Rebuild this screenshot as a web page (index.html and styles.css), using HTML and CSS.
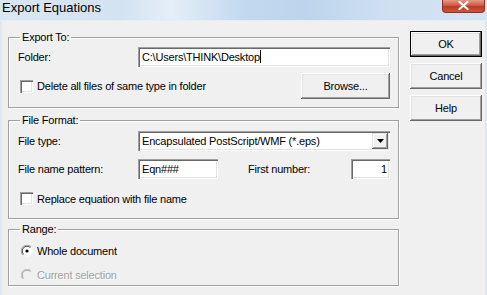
FILE: index.html
```html
<!DOCTYPE html>
<html lang="en">
<head>
    <meta charset="utf-8">
    <title>Export Equations</title>
    <link rel="stylesheet" href="styles.css">
</head>
<body>
    <div class="dialog">
        <div class="titlebar">
            <span class="title">Export Equations</span>
            <span class="close">
                <svg width="11" height="9" viewBox="0 0 11 9"><path d="M1.5 1 L9.5 8 M9.5 1 L1.5 8" stroke="#fff" stroke-width="2.2" stroke-linecap="round"/></svg>
            </span>
        </div>

        <div class="client">
            <div class="groups">
                <fieldset class="group export-to">
                    <legend>Export To:</legend>
                    <div class="row">
                        <span class="lbl">Folder:</span>
                        <div class="edit wide">C:\Users\THINK\Desktop<span class="caret"></span></div>
                    </div>
                    <div class="row row-browse">
                        <label class="check"><span class="box"></span>Delete all files of same type in folder</label>
                        <button class="btn browse">Browse...</button>
                    </div>
                </fieldset>

                <fieldset class="group file-format">
                    <legend>File Format:</legend>
                    <div class="row">
                        <span class="lbl">File type:</span>
                        <div class="edit wide combo">
                            Encapsulated PostScript/WMF (*.eps)
                            <span class="drop">
                                <svg width="7" height="4" viewBox="0 0 7 4"><path d="M0 0 H7 L3.5 4 Z" fill="#000"/></svg>
                            </span>
                        </div>
                    </div>
                    <div class="row row-gap">
                        <span class="lbl">File name pattern:</span>
                        <div class="edit pattern">Eqn###</div>
                        <span class="lbl-first">First number:</span>
                        <div class="edit number">1</div>
                    </div>
                    <div class="row row-check">
                        <label class="check"><span class="box"></span>Replace equation with file name</label>
                    </div>
                </fieldset>

                <fieldset class="group range">
                    <legend>Range:</legend>
                    <label class="radio">
                        <svg width="12" height="12" viewBox="0 0 12 12">
                            <circle cx="6" cy="6" r="5.5" fill="#fff"/>
                            <path d="M1.8 10.2 A5.5 5.5 0 0 1 10.2 1.8" stroke="#a0a0a0" fill="none"/>
                            <path d="M2.6 9.4 A4.5 4.5 0 0 1 9.4 2.6" stroke="#404040" fill="none"/>
                            <circle cx="6" cy="6" r="1.6" fill="#000"/>
                        </svg>
                        Whole document
                    </label>
                    <label class="radio disabled">
                        <svg width="12" height="12" viewBox="0 0 12 12">
                            <circle cx="6" cy="6" r="5.5" fill="#f0f0f0"/>
                            <path d="M1.8 10.2 A5.5 5.5 0 0 1 10.2 1.8" stroke="#c0c0c0" fill="none"/>
                            <path d="M2.6 9.4 A4.5 4.5 0 0 1 9.4 2.6" stroke="#a0a0a0" fill="none"/>
                        </svg>
                        Current selection
                    </label>
                </fieldset>
            </div>

            <div class="buttons">
                <button class="btn default">OK</button>
                <button class="btn">Cancel</button>
                <button class="btn">Help</button>
            </div>
        </div>
    </div>
</body>
</html>
```

FILE: styles.css
```css
* {
    box-sizing: border-box;
}
body {
    margin: 0;
    background-color: #f0f0f0;
    font-family: "Liberation Sans", Arial, sans-serif;
    font-size: 11px;
    letter-spacing: -0.2px;
    color: #000;
}
.dialog {
    width: 487px;
    height: 295px;
    overflow: hidden;
    display: flex;
    flex-direction: column;
    background-color: #f0f0f0;
}

/* title bar (aero) */
.titlebar {
    height: 21px;
    display: flex;
    align-items: flex-start;
    background: linear-gradient(90deg, #d9e6f3 0%, #d3e3f2 25%, #e4eef8 35%, #c3d9ef 50%, #bcd4ec 62%, #cfe0f1 80%, #d5e4f3 100%);
}
.title {
    padding-left: 2px;
    font-size: 13px;
    line-height: 16px;
    letter-spacing: 0;
    color: #000;
}
.close {
    margin-left: auto;
    margin-right: 2px;
    width: 43px;
    height: 13px;
    display: flex;
    justify-content: center;
    align-items: center;
    padding-bottom: 1px;
    background: linear-gradient(#e39a88, #cf5a43 45%, #bd3b24 55%, #c9563d);
    border: 1px solid #8e2f1f;
    border-top: none;
    border-radius: 0 0 4px 4px;
}

.client {
    flex: 1;
    display: flex;
    padding: 9px 0 0 8px;
    border-top: 1px solid #e6eef6;
    margin-top: -1px;
    box-shadow: inset 2px 0 #dde8f3, inset -2px 0 #dde8f3;
}
.groups {
    width: 391px;
    display: flex;
    flex-direction: column;
}

/* etched group boxes */
.group {
    margin: 0;
    padding: 0 8px 0 9px;
    min-inline-size: 0;
    border: 1px solid #a0a0a0;
    box-shadow: inset 1px 1px 0 #fff, 1px 1px 0 #fff;
}
.group legend {
    padding: 0 2px;
    margin-left: 2px;
    line-height: 14px;
    background-color: #f0f0f0;
}
.export-to {
    padding-top: 3px;
    padding-bottom: 8px;
}
.file-format {
    margin-top: 5px;
    padding-top: 4px;
    padding-bottom: 13px;
}
.range {
    margin-top: 3px;
    padding-top: 8px;
    padding-bottom: 4px;
}

.row {
    display: flex;
    align-items: center;
    height: 20px;
}
.row-browse {
    height: 26px;
    margin-top: 6px;
    justify-content: space-between;
}
.row-gap {
    margin-top: 8px;
}
.row-check {
    height: 13px;
    margin-top: 13px;
}
.lbl {
    width: 120px;
}
.lbl-first {
    margin-left: 30px;
    flex: 1;
}

/* sunken edit boxes */
.edit {
    position: relative;
    height: 20px;
    line-height: 20px;
    padding-left: 4px;
    background-color: #fff;
    white-space: nowrap;
    box-shadow: inset 1px 1px #a0a0a0, inset 2px 2px #696969, inset -1px -1px #fff, inset -2px -2px #e3e3e3;
}
.wide {
    width: 252px;
}
.pattern {
    width: 80px;
}
.number {
    width: 39px;
    text-align: right;
    padding-right: 3px;
}
.caret {
    display: inline-block;
    width: 1px;
    height: 13px;
    background-color: #000;
    vertical-align: -2px;
}
.combo .drop {
    position: absolute;
    right: 2px;
    top: 2px;
    width: 16px;
    height: 16px;
    display: flex;
    justify-content: center;
    align-items: center;
    background-color: #f0f0f0;
    box-shadow: inset -1px -1px #696969, inset 1px 1px #e3e3e3, inset -2px -2px #a0a0a0, inset 2px 2px #fff;
}

/* check boxes and radios */
.check, .radio {
    display: flex;
    align-items: center;
    margin-left: 2px;
}
.check .box {
    width: 13px;
    height: 13px;
    margin-right: 4px;
    background-color: #fff;
    box-shadow: inset 1px 1px #a0a0a0, inset 2px 2px #696969, inset -1px -1px #fff, inset -2px -2px #e3e3e3;
}
.radio {
    height: 13px;
    margin-left: 3px;
}
.radio svg {
    margin-right: 4px;
}
.radio + .radio {
    margin-top: 11px;
}
.radio.disabled {
    color: #a0a0a0;
    text-shadow: 1px 1px 0 #fff;
}

/* push buttons */
.btn {
    font: inherit;
    letter-spacing: inherit;
    color: #000;
    background-color: #f0f0f0;
    border: none;
    padding: 0;
    box-shadow: inset -1px -1px #696969, inset 1px 1px #fff, inset -2px -2px #a0a0a0, inset 2px 2px #e3e3e3;
}
.browse {
    width: 89px;
    height: 26px;
}
.buttons {
    margin-left: 11px;
    padding-top: 1px;
    display: flex;
    flex-direction: column;
    gap: 6px;
}
.buttons .btn {
    width: 72px;
    height: 26px;
}
.btn.default {
    border: 1px solid #000;
    box-shadow: inset -1px -1px #696969, inset 1px 1px #fff, inset -2px -2px #a0a0a0, inset 2px 2px #e3e3e3;
}
```
